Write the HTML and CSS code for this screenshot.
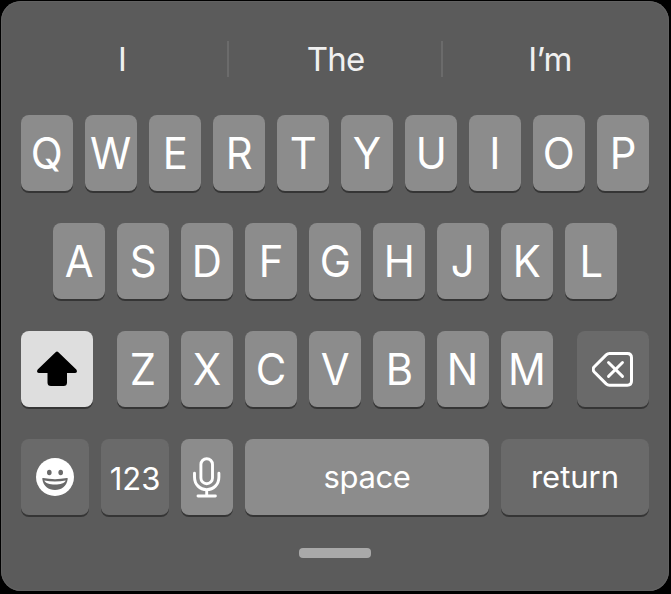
FILE: index.html
```html
<!DOCTYPE html>
<html lang="en">
<head>
  <meta charset="UTF-8">
  <meta name="viewport" content="width=device-width, initial-scale=1.0">
  <title>Keyboard</title>
  <link rel="stylesheet" href="styles.css">
</head>
<body>
  <div class="keyboard">
    <div class="suggestions">
      <span class="suggestion">I</span>
      <span class="suggestion middle">The</span>
      <span class="suggestion">I’m</span>
    </div>
    <div class="row">
      <div class="key"><span>Q</span></div>
      <div class="key"><span>W</span></div>
      <div class="key"><span>E</span></div>
      <div class="key"><span>R</span></div>
      <div class="key"><span>T</span></div>
      <div class="key"><span>Y</span></div>
      <div class="key"><span>U</span></div>
      <div class="key"><span>I</span></div>
      <div class="key"><span>O</span></div>
      <div class="key"><span>P</span></div>
    </div>
    <div class="row">
      <div class="key"><span>A</span></div>
      <div class="key"><span>S</span></div>
      <div class="key"><span>D</span></div>
      <div class="key"><span>F</span></div>
      <div class="key"><span>G</span></div>
      <div class="key"><span>H</span></div>
      <div class="key"><span>J</span></div>
      <div class="key"><span>K</span></div>
      <div class="key"><span>L</span></div>
    </div>
    <div class="row">
      <div class="key shift">
        <svg width="40" height="36" viewBox="0 0 40 36">
          <path d="M18.600 1.200Q20 -.1 21.400 1.200L39.300 18.600Q41 21.800 38.200 22H30V31.500Q30 35 26.500 35H14Q10.500 35 10.500 31.500V22H1.800Q-1 21.800 .7 18.600Z" fill="#000"/>
        </svg>
      </div>
      <div class="key"><span>Z</span></div>
      <div class="key"><span>X</span></div>
      <div class="key"><span>C</span></div>
      <div class="key"><span>V</span></div>
      <div class="key"><span>B</span></div>
      <div class="key"><span>N</span></div>
      <div class="key"><span>M</span></div>
      <div class="key dark delete">
        <svg width="42" height="35" viewBox="0 0 42 35" fill="none" stroke="#fff" stroke-width="3" stroke-linecap="round" stroke-linejoin="round">
          <path d="M17.500 1.500H35.300Q39.500 1.500 39.500 5.700V29Q39.500 33.200 35.300 33.200H17.500Q15.600 33.200 14.200 31.900L2.300 20Q-.1 17.400 2.300 14.800L14.200 2.900Q15.600 1.500 17.500 1.500Z"/>
          <path d="M16.500 10.500L30.500 24.400M30.500 10.500L16.500 24.400" stroke-width="2.900"/>
        </svg>
      </div>
    </div>
    <div class="row">
      <div class="key dark emoji">
        <svg width="38" height="38" viewBox="0 0 38 38">
          <circle cx="19" cy="19" r="19" fill="#fff"/>
          <ellipse cx="13.300" cy="14.500" rx="2.300" ry="2.800" fill="#6a6a6a"/>
          <ellipse cx="24.700" cy="14.500" rx="2.300" ry="2.800" fill="#6a6a6a"/>
          <path d="M6.300 21Q6 19.900 7.200 20.100Q19 22.300 30.800 20.100Q32 19.900 31.700 21C30.500 28.500 25.500 32 19 32S7.500 28.500 6.300 21Z" fill="#6a6a6a"/>
          <path d="M8.300 22.500Q19 24.600 29.700 22.500C28.700 25.300 24.500 26.500 19 26.500S9.300 25.300 8.300 22.500Z" fill="#fff"/>
        </svg>
      </div>
      <div class="key dark numbers">123</div>
      <div class="key mic">
        <svg width="28" height="41" viewBox="0 0 28 41" fill="none" stroke="#fff" stroke-width="2.900" stroke-linecap="round">
          <rect x="7.900" y="1.700" width="11.600" height="25" rx="5.800"/>
          <path d="M1.500 16.300V20C1.500 27.500 6.800 32.600 13.700 32.600S25.900 27.500 25.900 20V16.300M13.700 32.600V39M5 39H22.400"/>
        </svg>
      </div>
      <div class="key space">space</div>
      <div class="key dark return">return</div>
    </div>
    <div class="handle"></div>
  </div>
</body>
</html>
```

FILE: styles.css
```css
* { box-sizing: border-box; }
body { margin: 0; padding: 1px; height: 594px; background: #000; font-family: Inter, "Liberation Sans", sans-serif; color: #fff; overflow: hidden; }

.keyboard { display: flex; flex-direction: column; width: 668px; height: 590px; padding: 40px 20px 0; background: #5b5b5b; border-radius: 20px; box-shadow: inset 0 0 0 1px #626262; }

.suggestions { display: grid; grid-template-columns: 212px 214px 214px; height: 36px; margin: 0 -4px 38px; }
.suggestion { display: flex; align-items: center; justify-content: center; color: #f0f0f0; font-size: 33px; line-height: 36px; letter-spacing: -0.8px; }
.suggestion:not(:last-child) { border-right: 2px solid #6b6b6b; }
.middle { padding-left: 1px; }

.row { display: flex; justify-content: center; gap: 12px; margin-bottom: 32px; }
.key { display: flex; align-items: center; justify-content: center; flex: none; width: 52px; height: 76px; border-radius: 8px; background: #8c8c8c; box-shadow: 0 2px 0 #353535; font-size: 44px; line-height: 76px; }
.key span { transform: scaleX(0.95); }
.dark { background: #6a6a6a; }
.shift { width: 72px; margin-right: 12px; background: #dedede; }
.delete { width: 72px; margin-left: 12px; }
.emoji { width: 68px; }
.numbers { width: 68px; padding-top: 3px; font-size: 31px; }
.mic { padding: 1px 1px 0 0; }
.space { width: 244px; padding-bottom: 1px; font-size: 31px; letter-spacing: -0.4px; }
.return { width: 148px; font-size: 31px; }

.handle { width: 72px; height: 10px; margin: 1px auto 0; border-radius: 4px; background: #a9a9a9; }
```
